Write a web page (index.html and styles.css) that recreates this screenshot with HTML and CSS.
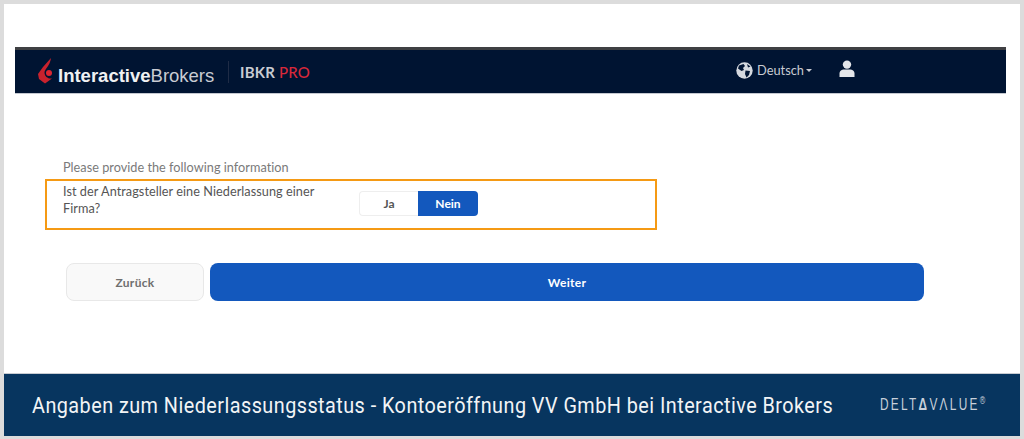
FILE: index.html
```html
<!DOCTYPE html>
<html>
<head>
<meta charset="utf-8">
<title>Kontoeröffnung</title>
<link rel="stylesheet" href="styles.css">
</head>
<body>
<div class="frame">
  <div class="shot">
    <div class="nav">
      <div class="logo">
        <svg class="flame" width="16" height="26" viewBox="0 0 16 26">
          <path d="M13 0 L5 9 L0 16 L1 21 L7 25.5 L14 20.5 C10 21 6.5 18.5 6.5 14.5 C6.5 11 12 8 13 0 Z" fill="#c8222d"/>
          <circle cx="11" cy="15" r="3" fill="#dc2631"/>
        </svg>
        <span class="logo-text"><b>Interactive</b>Brokers</span>
      </div>
      <div class="divider"></div>
      <div class="product">IBKR <span class="pro">PRO</span></div>
      <div class="nav-right">
        <svg width="17" height="17" viewBox="0 0 17 17">
          <circle cx="8.5" cy="8.5" r="8.2" fill="#d5d9df"/>
          <path d="M3 3.5 L7.5 2 L9 4 L7 6 L8 8 L5.5 9 L2 6.5 Z M9.5 8.5 L14 9 L13 13 L10.5 15.5 L9 12 Z M11 2 L14.5 4.5 L12 5.5 Z" fill="#001432"/>
        </svg>
        <span class="lang">Deutsch</span>
        <span class="caret"></span>
        <svg class="user" width="16" height="17" viewBox="0 0 16 17">
          <circle cx="8" cy="4.6" r="4.2" fill="#e4e6ea"/>
          <path d="M0.5 17 V13.5 C0.5 11 3 9.6 5 9.6 H11 C13 9.6 15.5 11 15.5 13.5 V17 Z" fill="#e4e6ea"/>
        </svg>
      </div>
    </div>
    <div class="form">
      <p class="hint">Please provide the following information</p>
      <div class="question">
        <p class="label">Ist der Antragsteller eine Niederlassung einer Firma?</p>
        <div class="toggle">
          <span class="opt">Ja</span>
          <span class="opt on">Nein</span>
        </div>
      </div>
      <div class="actions">
        <button class="btn back">Zurück</button>
        <button class="btn next">Weiter</button>
      </div>
    </div>
  </div>
  <div class="caption">
    <span class="title">Angaben zum Niederlassungsstatus - Kontoeröffnung VV GmbH bei Interactive Brokers</span>
    <span class="brand">DELT<b>Δ</b>VΛLUE<sup>®</sup></span>
  </div>
</div>
</body>
</html>
```

FILE: styles.css
```css
html, body, p {margin: 0; padding: 0;}
body {background: #fff; font-family: "Lato", "Liberation Sans", sans-serif;}

.frame {width: 1024px; height: 439px; box-sizing: border-box; border: solid #dcdcdc; border-width: 4px 4px 3px 4px; display: flex; flex-direction: column; background: #fff;}
.shot {flex: 1; padding: 43px 14px 0 11px;}

.nav {height: 43px; background: #001432; border-top: 3px solid #3f4043; display: flex; align-items: center; padding-left: 23px; box-shadow: 0 1px 0 #c4c8d0;}
.logo {display: flex; align-items: center; width: 190px;}
.flame {margin-top: -1px;}
.logo-text {font-family: "Liberation Sans", sans-serif; color: #c9ccd3; font-size: 18.5px; white-space: nowrap; margin: 8px 0 0 4px;}
.logo-text b {color: #f0f1f3;}
.divider {width: 1px; height: 22px; background: #1f2c46; margin-right: 11px;}
.product {color: #c9ccd3; font-size: 15px; font-weight: 700; white-space: nowrap; letter-spacing: 0.2px;}
.pro {color: #d8283a; font-weight: 500;}
.nav-right {margin-left: auto; display: flex; align-items: center; color: #c9ccd3; font-size: 12.8px; margin-right: 151px; margin-top: -3px;}
.lang {margin-left: 4px;}
.caret {width: 0; height: 0; border: solid transparent; border-width: 3px 3px 0 3px; border-top-color: #c9ccd3; margin-left: 2px;}
.user {margin-left: 27px; margin-top: -3px;}

.form {padding-top: 66px;}
.hint {color: #7a7a7a; font-size: 12.7px; line-height: 16px; letter-spacing: 0.02px; padding-left: 48px;}
.question {width: 612px; height: 51px; box-sizing: border-box; border: 2px solid #f59a14; margin: 4px 0 0 30px; padding: 2px 0 0 16px; display: flex;}
.label {width: 280px; color: #555; font-size: 12.7px; line-height: 17px; letter-spacing: 0.05px;}
.toggle {display: flex; margin: 8px 0 0 16px; height: 25px; font-size: 12px; font-weight: 700;}
.opt {width: 59px; display: flex; align-items: center; justify-content: center; color: #555; background: #fff; border: 1px solid #eeeeee; border-right: 0; border-radius: 4px 0 0 4px; box-sizing: border-box;}
.opt.on {width: 60px; color: #fff; background: #1358bd; border: 0; border-radius: 0 4px 4px 0;}

.actions {display: flex; gap: 6px; margin: 33px 0 0 51px; width: 858px;}
.btn {height: 38px; font-family: inherit; font-size: 12px; font-weight: 700; letter-spacing: 0.3px; box-sizing: border-box; border-radius: 8px; padding: 0;}
.back {width: 138px; background: #f9f9f9; border: 1px solid #e8e8e8; color: #6f6f6f;}
.next {flex: 1; background: #1358bd; border: 0; color: #fff;}

.caption {height: 63px; background: #07355f; border-top: 1px solid #c8ccd2; box-sizing: border-box; display: flex; align-items: center; padding-left: 28px; color: #f2f4f6; white-space: nowrap;}
.title {font-family: "Roboto", sans-serif; font-size: 22px; display: inline-block; width: 801px; letter-spacing: 0.52px; transform: scaleX(0.9); transform-origin: left center;}
.brand {display: inline-block; margin-left: 47px; font-family: "Liberation Sans", sans-serif; font-size: 16px; letter-spacing: 3.1px; color: #c8d0da; margin-top: -1px; transform: scaleX(0.74); transform-origin: left center;}
.brand b {font-weight: 700;}
.brand sup {font-size: 10px; letter-spacing: 0;}
```
